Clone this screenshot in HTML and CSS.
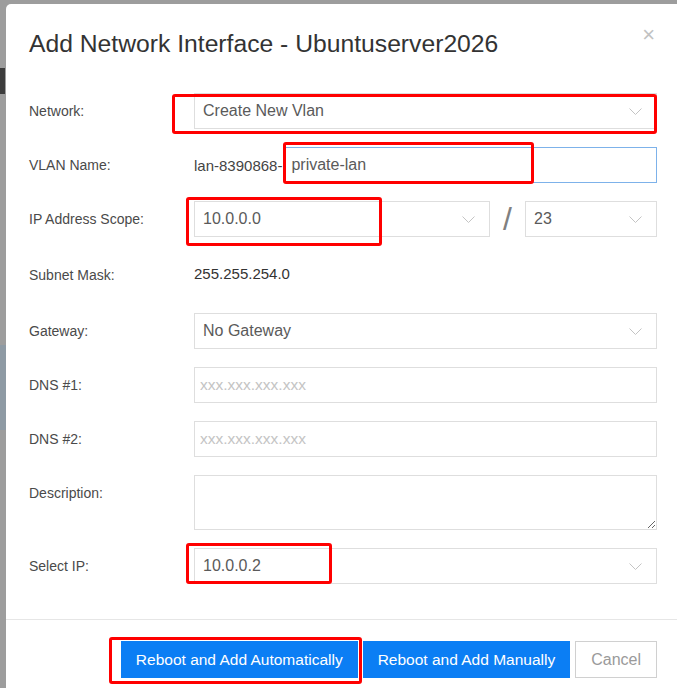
FILE: index.html
```html
<!DOCTYPE html>
<html lang="en">
<head>
    <meta charset="UTF-8">
    <meta name="viewport" content="width=device-width, initial-scale=1.0">
    <title>Add Network Interface</title>
    <link rel="stylesheet" href="styles.css">
</head>
<body>
    <div class="modal">
        <div class="modal-header">
            <h2 class="modal-title">Add Network Interface - Ubuntuserver2026</h2>
            <span class="close">&times;</span>
        </div>

        <div class="modal-body">
            <div class="form-row">
                <label>Network:</label>
                <div class="control">
                    <div class="select">
                        <span>Create New Vlan</span>
                        <svg class="chevron" width="13" height="7" viewBox="0 0 13 7"><path d="M0.5 0.5 L6.5 6.5 L12.5 0.5"/></svg>
                    </div>
                </div>
            </div>

            <div class="form-row">
                <label>VLAN Name:</label>
                <div class="control">
                    <span class="prefix">lan-8390868-</span>
                    <input class="input input-focus" type="text" value="private-lan">
                </div>
            </div>

            <div class="form-row">
                <label>IP Address Scope:</label>
                <div class="control">
                    <div class="select select-ip">
                        <span>10.0.0.0</span>
                        <svg class="chevron" width="13" height="7" viewBox="0 0 13 7"><path d="M0.5 0.5 L6.5 6.5 L12.5 0.5"/></svg>
                    </div>
                    <span class="slash">/</span>
                    <div class="select">
                        <span>23</span>
                        <svg class="chevron" width="13" height="7" viewBox="0 0 13 7"><path d="M0.5 0.5 L6.5 6.5 L12.5 0.5"/></svg>
                    </div>
                </div>
            </div>

            <div class="form-row row-text">
                <label>Subnet Mask:</label>
                <div class="control">
                    <span class="static">255.255.254.0</span>
                </div>
            </div>

            <div class="form-row">
                <label>Gateway:</label>
                <div class="control">
                    <div class="select">
                        <span>No Gateway</span>
                        <svg class="chevron" width="13" height="7" viewBox="0 0 13 7"><path d="M0.5 0.5 L6.5 6.5 L12.5 0.5"/></svg>
                    </div>
                </div>
            </div>

            <div class="form-row">
                <label>DNS #1:</label>
                <div class="control">
                    <input class="input" type="text" placeholder="xxx.xxx.xxx.xxx">
                </div>
            </div>

            <div class="form-row">
                <label>DNS #2:</label>
                <div class="control">
                    <input class="input" type="text" placeholder="xxx.xxx.xxx.xxx">
                </div>
            </div>

            <div class="form-row row-top">
                <label>Description:</label>
                <div class="control">
                    <textarea class="textarea"></textarea>
                </div>
            </div>

            <div class="form-row">
                <label>Select IP:</label>
                <div class="control">
                    <div class="select">
                        <span>10.0.0.2</span>
                        <svg class="chevron" width="13" height="7" viewBox="0 0 13 7"><path d="M0.5 0.5 L6.5 6.5 L12.5 0.5"/></svg>
                    </div>
                </div>
            </div>
        </div>

        <div class="modal-footer">
            <button class="btn btn-primary">Reboot and Add Automatically</button>
            <button class="btn btn-primary">Reboot and Add Manually</button>
            <button class="btn btn-default">Cancel</button>
        </div>
    </div>

    <!-- red highlight boxes drawn over the dialog -->
    <div class="mark mark-network"></div>
    <div class="mark mark-vlan"></div>
    <div class="mark mark-scope"></div>
    <div class="mark mark-ip"></div>
    <div class="mark mark-auto"></div>
</body>
</html>
```

FILE: styles.css
```css
* {
    box-sizing: border-box;
}

body {
    margin: 0;
    height: 688px;
    overflow: hidden;
    font-family: "Liberation Sans", Arial, sans-serif;
    background:
        linear-gradient(#3c3c3c, #3c3c3c) 0 68px / 5px 26px no-repeat,
        linear-gradient(#8e9aa4, #8e9aa4) 0 345px / 6px 85px no-repeat,
        #9d9d9d;
}

.modal {
    margin: 4px 0 0 6px;
    min-height: 684px;
    background: #fff;
    border-radius: 5px 0 0 0;
}

.modal-header {
    display: flex;
    justify-content: space-between;
    align-items: flex-start;
    padding: 24px 22px 0 23px;
}

.modal-title {
    margin: 0;
    font-size: 24.7px;
    font-weight: normal;
    line-height: 32px;
    color: #333;
}

.close {
    margin-top: -4px;
    font-size: 22px;
    line-height: 22px;
    color: #c2c2c2;
}

.modal-body {
    padding: 33px 20px 35px 23px;
}

.form-row {
    display: flex;
    align-items: center;
    min-height: 36px;
    margin-bottom: 18px;
}

.form-row:last-child {
    margin-bottom: 0;
}

.row-text {
    min-height: 40px;
}

.row-text .control {
    padding-bottom: 4px;
}

.row-top {
    align-items: flex-start;
}

.row-top label {
    padding-top: 10px;
}

.form-row label {
    width: 165px;
    flex-shrink: 0;
    font-size: 14px;
    color: #4a4a4a;
}

.control {
    flex: 1;
    display: flex;
    align-items: center;
}

.select {
    flex: 1;
    height: 36px;
    display: flex;
    align-items: center;
    justify-content: space-between;
    padding: 0 14px 0 8px;
    border: 1px solid #dedede;
    font-size: 16px;
    color: #5a5a5a;
}

.select-ip {
    flex: none;
    width: 296px;
}

.chevron {
    fill: none;
    stroke: #c4c4c4;
    stroke-width: 1;
}

.slash {
    width: 35px;
    text-align: center;
    font-size: 32px;
    line-height: 36px;
    color: #808080;
}

.prefix {
    margin-right: 3px;
    font-size: 15px;
    color: #444;
}

.static {
    font-size: 15px;
    color: #333;
}

.input {
    flex: 1;
    height: 36px;
    padding: 0 5px;
    border: 1px solid #dedede;
    font-family: inherit;
    font-size: 16px;
    color: #5a5a5a;
    outline: none;
}

.input::placeholder {
    font-size: 15.5px;
    color: #c4c4c4;
}

.input-focus {
    border-color: #7db2ea;
}

.textarea {
    flex: 1;
    height: 55px;
    border: 1px solid #dedede;
    font-family: inherit;
    resize: vertical;
    outline: none;
}

.modal-footer {
    display: flex;
    justify-content: flex-end;
    gap: 5px;
    padding: 21px 20px 0;
    border-top: 1px solid #e6e6e6;
}

.btn {
    height: 37px;
    padding: 0 15px;
    border: none;
    font-family: inherit;
    font-size: 15.5px;
    cursor: pointer;
}

.btn-primary {
    background: #0b7ef4;
    color: #fff;
}

.btn-default {
    background: #fff;
    border: 1px solid #d0d0d0;
    color: #9a9a9a;
    font-size: 16px;
}

.mark {
    position: absolute;
    border: 3px solid #f00;
    border-radius: 3px;
}

.mark-network {
    left: 172px;
    top: 94px;
    width: 485px;
    height: 40px;
}

.mark-vlan {
    left: 283px;
    top: 142px;
    width: 251px;
    height: 42px;
}

.mark-scope {
    left: 186px;
    top: 197px;
    width: 196px;
    height: 49px;
}

.mark-ip {
    left: 186px;
    top: 543px;
    width: 146px;
    height: 41px;
}

.mark-auto {
    left: 109px;
    top: 637px;
    width: 253px;
    height: 47px;
}
```
